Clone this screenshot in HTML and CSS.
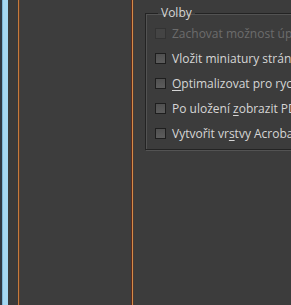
FILE: index.html
```html
<!DOCTYPE html>
<html lang="cs">
<head>
  <meta charset="UTF-8" />
  <title>Volby</title>
  <link rel="stylesheet" href="styles.css">
</head>
<body>
  <div class="edge"></div>
  <div class="rail"></div>
  <div class="gutter"></div>
  <div class="panel"></div>
  <div class="dialog">
    <fieldset class="options">
      <legend>Volby</legend>
      <label class="opt disabled"><span class="box"></span><span>Zachovat možnost úprav v aplikaci Illustrator</span></label>
      <label class="opt"><span class="box"></span><span>Vložit miniatury stránek</span></label>
      <label class="opt"><span class="box"></span><span><u>O</u>ptimalizovat pro rychlé zobrazení na webu</span></label>
      <label class="opt"><span class="box"></span><span>Po uložení <u>z</u>obrazit PDF</span></label>
      <label class="opt"><span class="box"></span><span>Vytvořit vr<u>s</u>tvy Acrobatu z vrstev nejvyšší úrovně</span></label>
    </fieldset>
  </div>
</body>
</html>
```

FILE: styles.css
```css
html,
body {
  margin: 0;
  padding: 0;
  height: 100%;
}

body {
  display: flex;
  background: #3c3c3c;
  overflow: hidden;
  font-family: 'Open Sans', 'Liberation Sans', sans-serif;
  font-size: 12px;
  color: #d6d6d6;
}

.edge {
  width: 2px;
  background: #303842;
}

.rail {
  width: 6px;
  background: #a6d8f2;
  box-shadow: inset 1px 0 0 #7fb6d6;
}

.gutter {
  width: 10px;
  background: #3a3a3a;
  border-right: 1px solid #c77a3c;
  box-shadow: 1px 0 0 #5a3c28;
}

.panel {
  width: 111px;
  margin-left: 1px;
  background: #3d3d3d;
  border-right: 1px solid #5b2a1c;
  box-shadow: 1px 0 0 #d58a48, 2px 0 0 #4a3a30;
}

.dialog {
  flex: 1;
  padding: 5px 0 0 13px;
  min-width: 0;
  overflow: hidden;
}

.options {
  margin: 0;
  width: 300px;
  padding: 0 0 3px 9px;
  border: 1px solid #232323;
  box-shadow: inset 1px 1px 0 #535353, 1px 1px 0 #535353;
}

.options legend {
  padding: 0 3px;
  margin-left: 3px;
  line-height: 16px;
  color: #d6d6d6;
}

.opt {
  display: flex;
  align-items: center;
  height: 25px;
  white-space: nowrap;
}

.box {
  width: 9px;
  height: 9px;
  margin-right: 6px;
  border: 1px solid #1e1e1e;
  background: linear-gradient(#505050, #5c5c5c);
  flex: none;
}

.opt.disabled {
  color: #6c6c6c;
}

.opt.disabled .box {
  border-color: #333;
  background: #444;
}

.opt u {
  text-underline-offset: 2px;
}
```
